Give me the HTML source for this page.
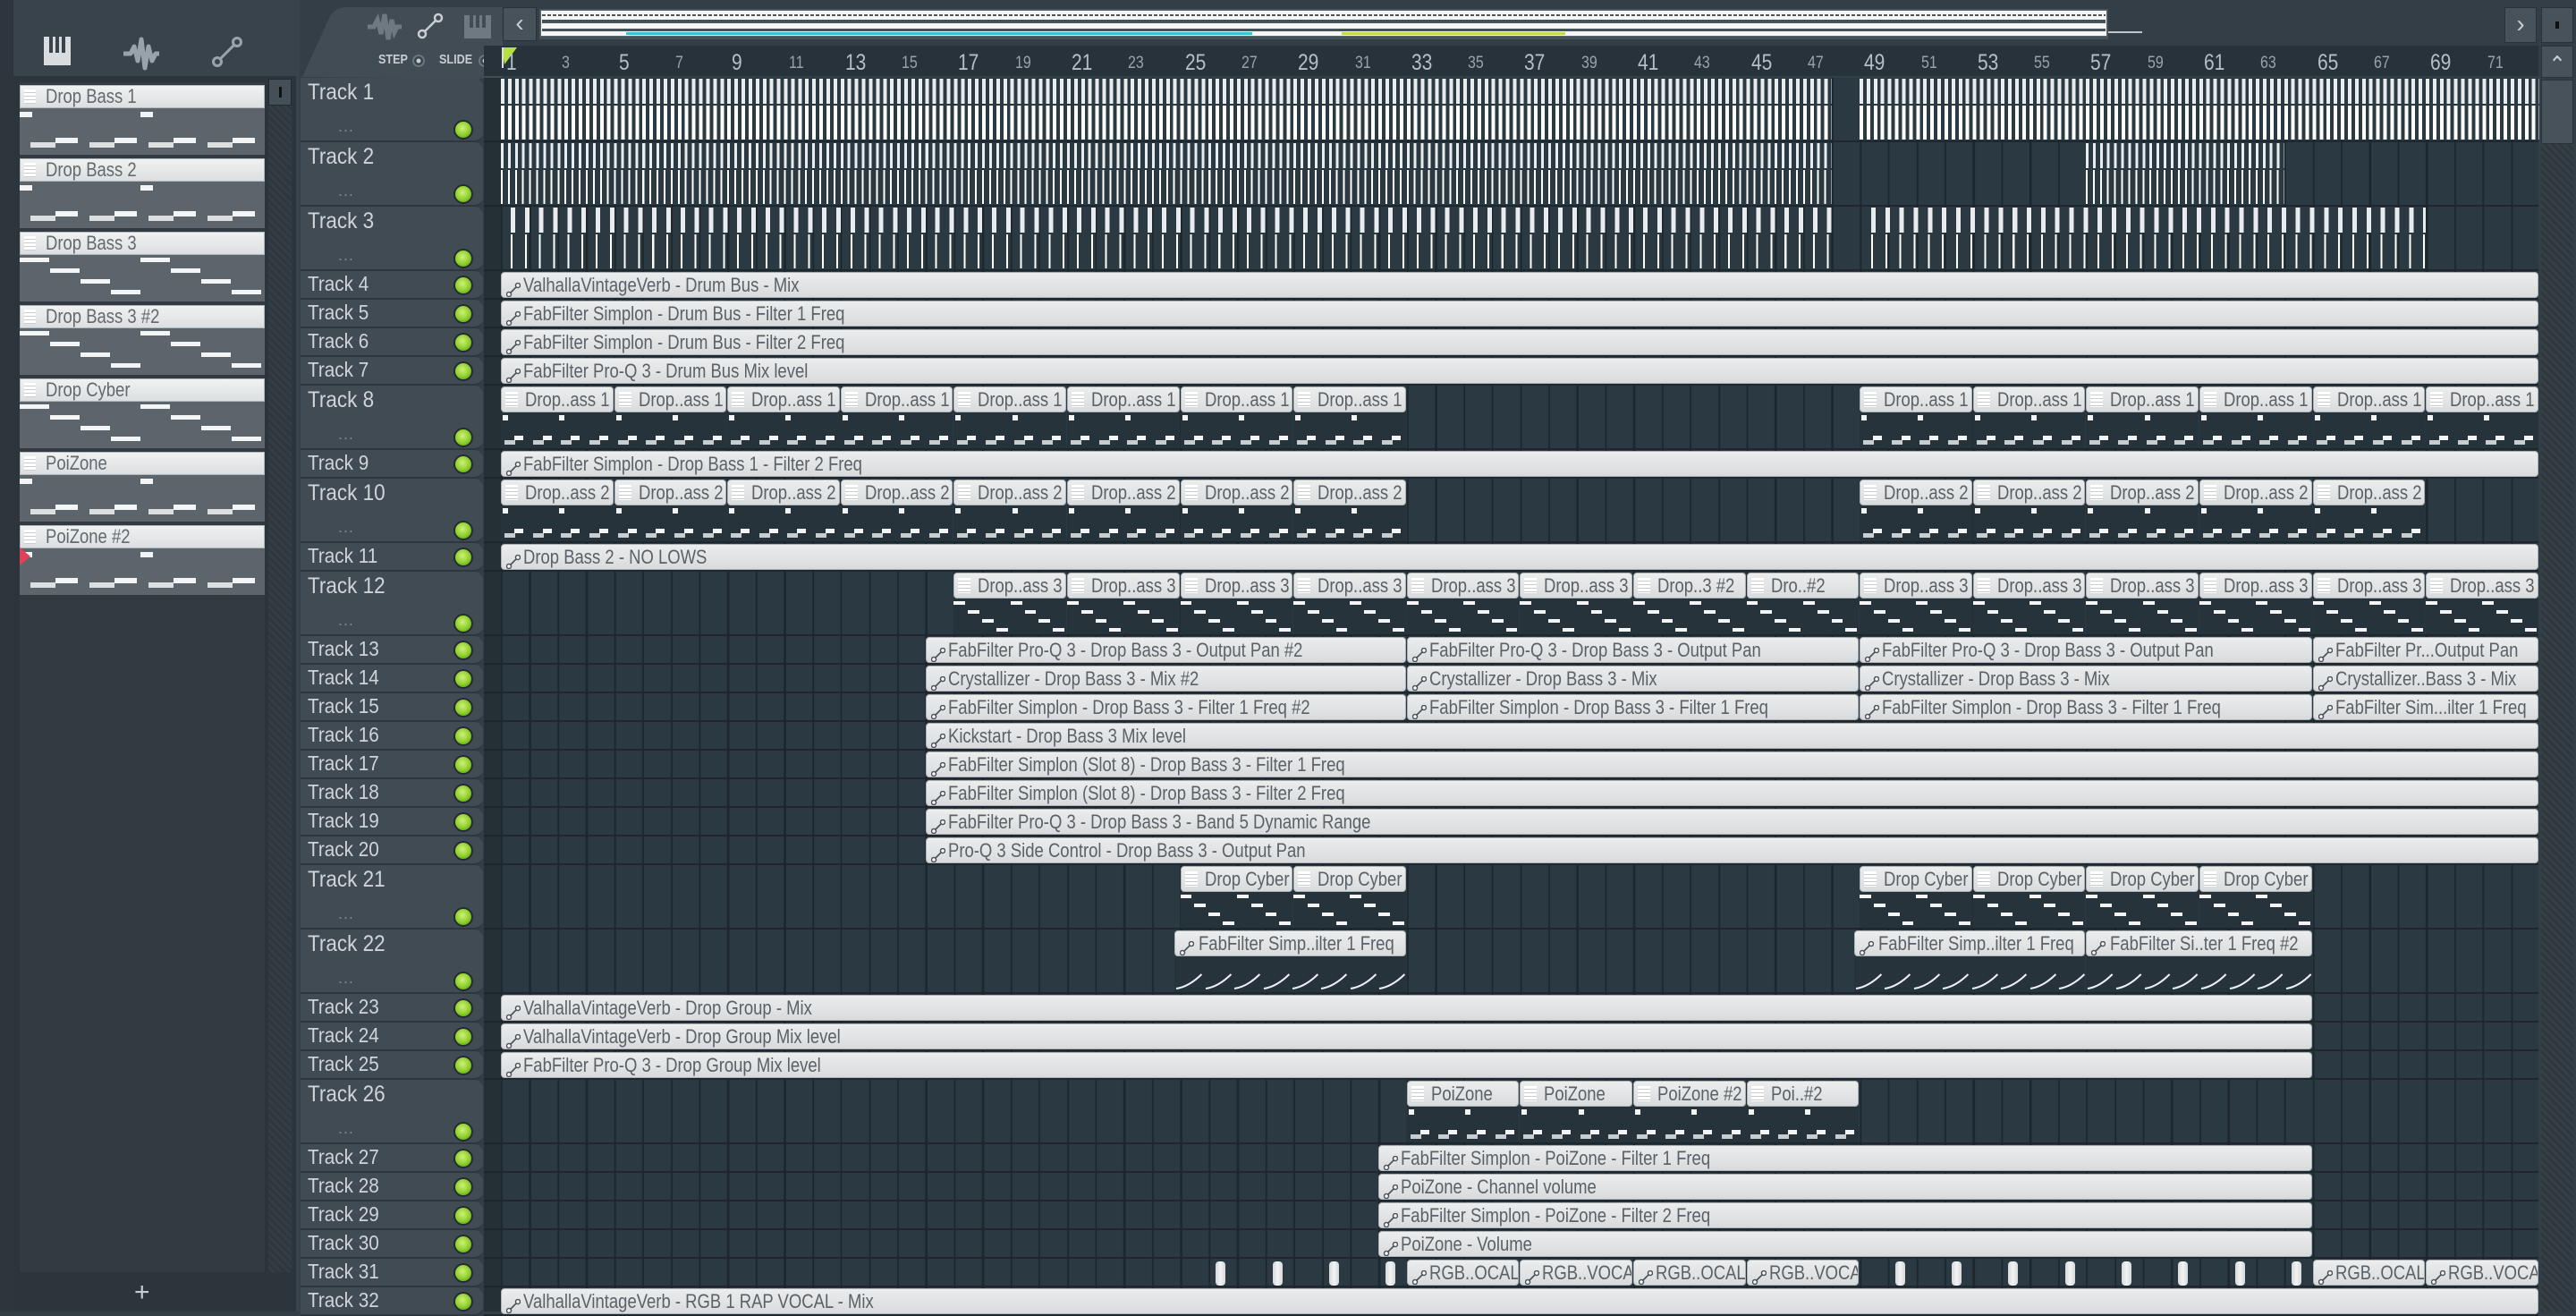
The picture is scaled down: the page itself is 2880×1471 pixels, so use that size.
<!DOCTYPE html>
<html><head><meta charset="utf-8">
<style>
*{margin:0;padding:0;box-sizing:border-box}
body{width:2880px;height:1466px;overflow:hidden;background:#343e46;font-family:"Liberation Sans Narrow","Liberation Sans","DejaVu Sans Condensed",sans-serif;position:relative}
.abs{position:absolute}
.t{display:inline-block;transform:scaleX(.84);transform-origin:0 50%;white-space:nowrap}
.hdr{position:absolute;left:336px;width:204px;background:#414b53;border-radius:0 10px 10px 0;border-bottom:2px solid #2e373e}
.hdr span{position:absolute;left:8px;top:2px;font-size:25px;color:#d0d4d8;transform:scaleX(.9);transform-origin:0 50%}
.led{position:absolute;left:507px;width:22px;height:22px;border-radius:50%;background:radial-gradient(circle at 45% 40%,#cff07a,#8ccf2a 55%,#4f7d16);border:2px solid #252c31}
.dots{position:absolute;left:378px;font-size:18px;color:#7c858c;letter-spacing:1px}
.clipA{position:absolute;background:linear-gradient(#eceded,#d8dbdd);border:1px solid #aeb3b7;border-radius:4px;overflow:hidden;white-space:nowrap;font-size:22px;color:#5a6167;line-height:28px;padding-left:24px}
.clipA i{position:absolute;left:5px;top:6px;width:16px;height:16px}
.pat{position:absolute;overflow:hidden}
.pat .ph{position:absolute;left:0;right:1px;top:0;height:29px;background:linear-gradient(#eceded,#d9dcde);border:1px solid #aeb3b7;border-radius:4px;white-space:nowrap;font-size:22px;color:#5a6167;line-height:27px;padding-left:26px;overflow:hidden}
.pat .ph b{position:absolute;left:4px;top:5px;width:14px;height:17px;background:repeating-linear-gradient(#fff 0 3px,#c9cdd0 3px 4px)}
.pat .ph i{position:absolute;left:5px;top:6px;width:16px;height:16px}
.pat .pb{position:absolute;left:0;right:1px;top:29px;bottom:0;background:#27333b}
.n{position:absolute;background:#f2f4f5;height:5px}
.item{position:absolute;left:22px;width:274px;height:82px}
.item .lab{position:absolute;left:0;top:0;width:274px;height:26px;background:linear-gradient(#f0f1f1,#dcdfe1);border:1px solid #b2b7bb;font-size:22px;color:#626a70;line-height:24px;padding-left:28px}
.item .lab b{position:absolute;left:4px;top:4px;width:13px;height:16px;background:repeating-linear-gradient(#fff 0 3px,#c9cdd0 3px 4px)}
.item .bd{position:absolute;left:0;top:26px;width:274px;height:52px;background:#5c656c}
.rl{position:absolute;top:58px;color:#aab3ba}
</style></head><body>
<div class="abs" style="left:0;top:0;width:15px;height:1466px;background:#2d363c"></div>
<div class="abs" style="left:15px;top:0;width:320px;height:1466px;background:#39434b"></div>
<div class="abs" style="left:15px;top:85px;width:316px;height:1381px;background:#2c353b"></div>
<div class="abs" style="left:22px;top:92px;width:274px;height:1330px;background:#323b42"></div>
<div class="abs" style="left:300px;top:88px;width:26px;height:1334px;background:repeating-linear-gradient(45deg,#2e373d 0 3px,#343d44 3px 6px)"></div>
<div class="abs" style="left:300px;top:88px;width:26px;height:30px;background:#454f57;border:1px solid #222a30"><div style="position:absolute;left:11px;top:8px;width:3px;height:12px;background:#111"></div></div>
<div class="abs" style="left:150px;top:1428px;font-size:30px;color:#c6ccd0">+</div>
<svg class="abs" style="left:48px;top:40px" width="32" height="36"><rect x="1" y="1" width="30" height="32" fill="#d8dcdf"/><rect x="7" y="1" width="4" height="18" fill="#39434b"/><rect x="14" y="1" width="4" height="18" fill="#39434b"/><rect x="21" y="1" width="4" height="18" fill="#39434b"/></svg>
<svg class="abs" style="left:136px;top:40px" width="44" height="40"><path d="M2 20 L10 20 L14 12 L18 28 L22 4 L26 36 L30 12 L34 28 L38 20 L42 20" stroke="#9aa3aa" stroke-width="5" fill="none" stroke-linejoin="round"/></svg>
<svg class="abs" style="left:236px;top:40px" width="36" height="36"><circle cx="7" cy="29" r="4.5" stroke="#9aa3aa" stroke-width="3" fill="none"/><circle cx="29" cy="7" r="4.5" stroke="#9aa3aa" stroke-width="3" fill="none"/><line x1="10" y1="26" x2="26" y2="10" stroke="#9aa3aa" stroke-width="3"/></svg>
<svg class="abs" style="left:338px;top:6px" width="224" height="82"><path d="M0 80 L30 14 Q36 2 50 2 L224 2 L224 82 Z" fill="#424c54"/></svg>
<svg class="abs" style="left:410px;top:14px" width="40" height="32"><path d="M1 16 L8 16 L12 8 L16 24 L20 2 L24 30 L28 8 L31 22 L34 16 L39 16" stroke="#6f7981" stroke-width="5" fill="none"/></svg>
<svg class="abs" style="left:466px;top:14px" width="30" height="30"><circle cx="6" cy="24" r="4" stroke="#c9ced2" stroke-width="2.5" fill="none"/><circle cx="24" cy="6" r="4" stroke="#c9ced2" stroke-width="2.5" fill="none"/><line x1="9" y1="21" x2="21" y2="9" stroke="#c9ced2" stroke-width="2.5"/></svg>
<svg class="abs" style="left:518px;top:16px" width="32" height="28"><rect x="1" y="1" width="30" height="26" fill="#6f7981"/><rect x="7" y="1" width="4" height="14" fill="#424c54"/><rect x="14" y="1" width="4" height="14" fill="#424c54"/><rect x="21" y="1" width="4" height="14" fill="#424c54"/></svg>
<div class="abs" style="left:423px;top:58px;font-size:15px;color:#c8cdd1;font-weight:bold"><span class="t">STEP</span></div>
<div class="abs" style="left:461px;top:61px;width:14px;height:14px;border-radius:50%;border:2px solid #6a747b;background:radial-gradient(#c8cdd1 30%,#3a444b 40%)"></div>
<div class="abs" style="left:491px;top:58px;font-size:15px;color:#c8cdd1;font-weight:bold"><span class="t">SLIDE</span></div>
<div class="abs" style="left:535px;top:61px;width:14px;height:14px;border-radius:50%;border:2px solid #6a747b;background:radial-gradient(#c8cdd1 30%,#3a444b 40%)"></div>
<div class="abs" style="left:562px;top:8px;width:38px;height:38px;background:#48525a;border:1px solid #2a3238;color:#c8cdd1;font-size:28px;text-align:center;line-height:34px">&lsaquo;</div>
<div class="abs" style="left:603px;top:10px;width:1754px;height:34px;background:#48525a"></div>
<div class="abs" style="left:604px;top:11px;width:1752px;height:30px;background:#f4f5f5;border:1px solid #5a646b"></div>
<div class="abs" style="left:606px;top:16px;width:1748px;height:2px;background:repeating-linear-gradient(90deg,#555 0 4px,#fff 4px 6px)"></div>
<div class="abs" style="left:606px;top:22px;width:1748px;height:4px;background:#46525a"></div>
<div class="abs" style="left:606px;top:32px;width:1748px;height:3px;background:#46525a"></div>
<div class="abs" style="left:700px;top:36px;width:700px;height:3px;background:#37c4d8"></div>
<div class="abs" style="left:1500px;top:36px;width:250px;height:3px;background:#c5d84a"></div>
<div class="abs" style="left:2357px;top:35px;width:38px;height:2px;background:#c0c6ca"></div>
<div class="abs" style="left:2800px;top:8px;width:36px;height:40px;background:#48525a;border:1px solid #2a3238;color:#c8cdd1;font-size:28px;text-align:center;line-height:36px">&rsaquo;</div>
<div class="abs" style="left:2841px;top:8px;width:36px;height:40px;background:#48525a;border:1px solid #2a3238"><div style="position:absolute;left:15px;top:15px;width:4px;height:8px;background:#111"></div></div>
<div class="abs" style="left:541px;top:51px;width:2297px;height:34px;background:#27323a"></div>
<svg class="abs" style="left:560px;top:52px" width="20" height="24"><path d="M1 1 L18 1 L4 20 Z" fill="#b6e03c"/><line x1="2" y1="1" x2="2" y2="24" stroke="#ddd" stroke-width="2"/></svg>
<div class="abs" style="left:2841px;top:51px;width:36px;height:36px;background:#48525a;border:1px solid #2a3238;color:#c8cdd1;font-size:26px;text-align:center;line-height:40px">&#8963;</div>
<div class="abs" style="left:2841px;top:89px;width:36px;height:1377px;background:repeating-linear-gradient(45deg,#2e373d 0 3px,#363f46 3px 6px)"></div>
<div class="abs" style="left:2841px;top:89px;width:36px;height:72px;background:#48525a;border:1px solid #2a3238"></div>
<div class="abs" id="grid" style="left:541px;top:87px;width:2297px;height:1379px;background:#2a373f"></div>
<div id="dyn"></div>
<script>
var S=31.65,X0=560;function bx(b){return X0+(b-1)*S}
var D=document.getElementById('dyn');var h='';
var g=document.getElementById('grid');
g.style.background='linear-gradient(90deg,#242f36 0 19px,transparent 19px),repeating-linear-gradient(90deg,#1c262c 0 2px,#2b3942 2px '+S+'px)';
g.style.backgroundPosition='0 0, 19px 0';
for(var b=1;b<=71;b+=2){var big=(b%4==1);h+='<div class="rl" style="left:'+(bx(b)+(b==1?6:5))+'px;top:'+(big?56:60)+'px;font-size:'+(big?25:19)+'px;color:'+(big?'#b7bfc6':'#9aa3aa')+'"><span class="t">'+b+'</span></div>'}
var types='TTTSSSSTSTSTSSSSSSSSTTSSSTSSSSSS';
var tops=[],y=87;for(var i=0;i<32;i++){tops.push(y);y+=types[i]=='T'?72:32}
function ht(r){return types[r-1]=='T'?72:32}
for(var r=1;r<=32;r++){var t=tops[r-1],H=ht(r);
h+='<div class="hdr" style="top:'+t+'px;height:'+H+'px"><span'+(H==32?' style="top:1px;font-size:23px"':'')+'>Track '+r+'</span></div>';
h+='<div class="led" style="top:'+(H==72?t+47:t+5)+'px"></div>';
if(H==72)h+='<div class="dots" style="top:'+(t+44)+'px">...</div>';
h+='<div class="abs" style="left:541px;top:'+(t+H-2)+'px;width:2297px;height:2px;background:#1d272d"></div>';
}
var link='<i><svg width="16" height="16"><circle cx="3" cy="13" r="2.5" stroke="#4a5258" stroke-width="1.5" fill="#fff"/><circle cx="13" cy="3" r="2.5" stroke="#4a5258" stroke-width="1.5" fill="#fff"/><line x1="5" y1="11" x2="11" y2="5" stroke="#4a5258" stroke-width="1.6"/></svg></i>';
function A(r,s,e,txt){var t=tops[r-1],H=ht(r);h+='<div class="clipA" style="left:'+bx(s)+'px;top:'+(t+1)+'px;width:'+(bx(e)-bx(s)-1)+'px;height:'+(H-3)+'px">'+link+'<span class="t">'+txt+'</span></div>'}
function notes(kind,w,bh){var o='';
 if(kind==1){for(var k=0;k<2;k++){var ox=k*w/2;o+='<div class="n" style="left:'+(ox+2)+'px;top:3px;width:6px;height:6px"></div>';
  for(var q=0;q<2;q++){var qx=ox+q*w/4;o+='<div class="n" style="left:'+(qx+4)+'px;top:'+(bh-9)+'px;width:12px;height:5px;opacity:.8"></div><div class="n" style="left:'+(qx+15)+'px;top:'+(bh-14)+'px;width:10px"></div>'}}}
 else if(kind==3){for(var k=0;k<2;k++){var ox=k*w/2;for(var j=0;j<4;j++)o+='<div class="n" style="left:'+(ox+j*w/8)+'px;top:'+(3+j*10)+'px;width:'+(w/8-3)+'px;height:4px"></div>'}}
 else if(kind==4){for(var k=0;k<8;k++)o+='<svg class="abs" style="left:'+(k*w/8)+'px;top:'+(bh-22)+'px" width="'+(w/8)+'" height="20"><path d="M2 18 Q'+(w/16)+' 16 '+(w/8-2)+' 2" stroke="#eef" stroke-width="2" fill="none"/></svg>'}
 return o}
function P(r,s,e,txt,kind,ico){var t=tops[r-1],H=ht(r),w=bx(e)-bx(s);
 h+='<div class="pat" style="left:'+bx(s)+'px;top:'+(t+1)+'px;width:'+w+'px;height:'+(H-3)+'px"><div class="pb">'+notes(kind,w,H-32)+'</div><div class="ph">'+(ico?link:'<b></b>')+'<span class="t">'+txt+'</span></div></div>'}
function W(r,s,e,per,sw){var t=tops[r-1],H=ht(r);
 h+='<div class="abs" style="left:'+bx(s)+'px;top:'+(t+1)+'px;width:'+(bx(e)-bx(s))+'px;height:28px;background:repeating-linear-gradient(90deg,#e9ecee 0 '+sw+'px,transparent '+sw+'px '+per+'px)"></div>';
 h+='<div class="abs" style="left:'+bx(s)+'px;top:'+(t+31)+'px;width:'+(bx(e)-bx(s))+'px;height:38px;background:repeating-linear-gradient(90deg,#ffffff 0 '+(r==1?sw:2)+'px,transparent '+(r==1?sw:2)+'px '+per+'px)"></div>'}
W(1,1,48,S/4,4);W(1,49,73,S/4,4);
W(2,1,48,S/4,3);W(2,57,64,S/4,3);
W(3,4/3,48,S/2,5);W(3,49.4,69,S/2,5);
A(4,1,73,'ValhallaVintageVerb - Drum Bus - Mix');
A(5,1,73,'FabFilter Simplon - Drum Bus - Filter 1 Freq');
A(6,1,73,'FabFilter Simplon - Drum Bus - Filter 2 Freq');
A(7,1,73,'FabFilter Pro-Q 3 - Drum Bus Mix level');
for(var b=1;b<33;b+=4)P(8,b,b+4,'Drop..ass 1',1);
for(var b=49;b<73;b+=4)P(8,b,b+4,'Drop..ass 1',1);
A(9,1,73,'FabFilter Simplon - Drop Bass 1 - Filter 2 Freq');
for(var b=1;b<33;b+=4)P(10,b,b+4,'Drop..ass 2',1);
for(var b=49;b<69;b+=4)P(10,b,b+4,'Drop..ass 2',1);
A(11,1,73,'Drop Bass 2 - NO LOWS');
var l12=['Drop..ass 3','Drop..ass 3','Drop..ass 3','Drop..ass 3','Drop..ass 3','Drop..ass 3','Drop..3 #2','Dro..#2'];
for(var k=0;k<8;k++)P(12,17+4*k,21+4*k,l12[k],3);
for(var b=49;b<73;b+=4)P(12,b,b+4,'Drop..ass 3',3);
A(13,16,33,'FabFilter Pro-Q 3 - Drop Bass 3 - Output Pan #2');A(13,33,49,'FabFilter Pro-Q 3 - Drop Bass 3 - Output Pan');A(13,49,65,'FabFilter Pro-Q 3 - Drop Bass 3 - Output Pan');A(13,65,73,'FabFilter Pr...Output Pan');
A(14,16,33,'Crystallizer - Drop Bass 3 - Mix #2');A(14,33,49,'Crystallizer - Drop Bass 3 - Mix');A(14,49,65,'Crystallizer - Drop Bass 3 - Mix');A(14,65,73,'Crystallizer..Bass 3 - Mix');
A(15,16,33,'FabFilter Simplon - Drop Bass 3 - Filter 1 Freq #2');A(15,33,49,'FabFilter Simplon - Drop Bass 3 - Filter 1 Freq');A(15,49,65,'FabFilter Simplon - Drop Bass 3 - Filter 1 Freq');A(15,65,73,'FabFilter Sim...ilter 1 Freq');
A(16,16,73,'Kickstart - Drop Bass 3 Mix level');
A(17,16,73,'FabFilter Simplon (Slot 8) - Drop Bass 3 - Filter 1 Freq');
A(18,16,73,'FabFilter Simplon (Slot 8) - Drop Bass 3 - Filter 2 Freq');
A(19,16,73,'FabFilter Pro-Q 3 - Drop Bass 3 - Band 5 Dynamic Range');
A(20,16,73,'Pro-Q 3 Side Control - Drop Bass 3 - Output Pan');
P(21,25,29,'Drop Cyber',3);P(21,29,33,'Drop Cyber',3);
for(var b=49;b<65;b+=4)P(21,b,b+4,'Drop Cyber',3);
P(22,24.8,33,'FabFilter Simp..ilter 1 Freq',4,1);P(22,48.8,57,'FabFilter Simp..ilter 1 Freq',4,1);P(22,57,65,'FabFilter Si..ter 1 Freq #2',4,1);
A(23,1,65,'ValhallaVintageVerb - Drop Group - Mix');
A(24,1,65,'ValhallaVintageVerb - Drop Group Mix level');
A(25,1,65,'FabFilter Pro-Q 3 - Drop Group Mix level');
P(26,33,37,'PoiZone',1);P(26,37,41,'PoiZone',1);P(26,41,45,'PoiZone #2',1);P(26,45,49,'Poi..#2',1);
A(27,32,65,'FabFilter Simplon - PoiZone - Filter 1 Freq');
A(28,32,65,'PoiZone - Channel volume');
A(29,32,65,'FabFilter Simplon - PoiZone - Filter 2 Freq');
A(30,32,65,'PoiZone - Volume');
var t31=tops[30];
function tiny(b){h+='<div class="abs" style="left:'+(bx(b)+8)+'px;top:'+(t31+3)+'px;width:11px;height:27px;border-radius:4px;background:linear-gradient(90deg,#d5d8da,#f2f3f3,#d5d8da)"></div>'}
for(var b=26;b<=32;b+=2)tiny(b);for(var b=50;b<=64;b+=2)tiny(b);
var rg=['RGB..OCAL','RGB..VOCAL','RGB..OCAL','RGB..VOCAL'];
for(var k=0;k<4;k++)A(31,33+4*k,37+4*k,rg[k]);
A(31,65,69,'RGB..OCAL');A(31,69,73,'RGB..VOCAL');
A(32,1,73,'ValhallaVintageVerb - RGB 1 RAP VOCAL - Mix');
var ch=['Drop Bass 1','Drop Bass 2','Drop Bass 3','Drop Bass 3 #2','Drop Cyber','PoiZone','PoiZone #2'];
for(var k=0;k<7;k++){var yy=95+k*82;var inner='';
 if(k<2||k>=5){inner+='<div class="n" style="left:0;top:4px;width:14px;height:6px"></div><div class="n" style="left:135px;top:4px;width:14px;height:6px"></div>';
  for(var q=0;q<4;q++){var qx=12+q*66;inner+='<div class="n" style="left:'+qx+'px;top:38px;width:28px;height:6px;opacity:.85"></div><div class="n" style="left:'+(qx+28)+'px;top:33px;width:25px;height:6px"></div>'}}
 else{for(var kk=0;kk<2;kk++)for(var j=0;j<4;j++)inner+='<div class="n" style="left:'+(kk*135+j*34)+'px;top:'+(3+j*12)+'px;width:33px;height:5px"></div>'}
 h+='<div class="item" style="top:'+yy+'px"><div class="bd">'+inner+'</div><div class="lab"><b></b><span class="t">'+ch[k]+'</span></div></div>'}
h+='<svg class="abs" style="left:22px;top:612px" width="14" height="20"><path d="M0 0 L12 10 L0 20 Z" fill="#e0405a"/></svg>';
D.innerHTML=h;
</script>
</body></html>
